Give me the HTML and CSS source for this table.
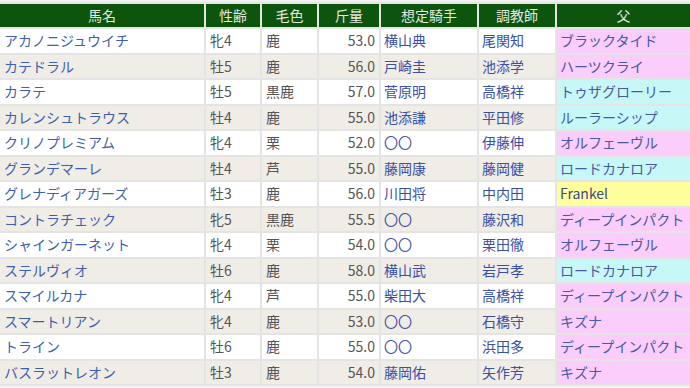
FILE: index.html
```html
<!DOCTYPE html>
<html lang="ja">
<head>
<meta charset="utf-8">
<title>出走予定馬</title>
<link rel="stylesheet" href="styles.css">
</head>
<body>
<table class="entries">
  <colgroup>
    <col class="w-name"><col class="w-sex"><col class="w-coat"><col class="w-wt"><col class="w-jockey"><col class="w-trainer"><col class="w-sire">
  </colgroup>
  <thead>
    <tr><th>馬名</th><th>性齢</th><th>毛色</th><th>斤量</th><th>想定騎手</th><th>調教師</th><th>父</th></tr>
  </thead>
  <tbody>
    <tr><td class="name">アカノニジュウイチ</td><td class="plain">牝4</td><td class="plain">鹿</td><td class="num">53.0</td><td class="link">横山典</td><td class="link">尾関知</td><td class="sire pink">ブラックタイド</td></tr>
    <tr><td class="name">カテドラル</td><td class="plain">牡5</td><td class="plain">鹿</td><td class="num">56.0</td><td class="link">戸崎圭</td><td class="link">池添学</td><td class="sire pink">ハーツクライ</td></tr>
    <tr><td class="name">カラテ</td><td class="plain">牡5</td><td class="plain">黒鹿</td><td class="num">57.0</td><td class="link">菅原明</td><td class="link">高橋祥</td><td class="sire cyan">トゥザグローリー</td></tr>
    <tr><td class="name">カレンシュトラウス</td><td class="plain">牡4</td><td class="plain">鹿</td><td class="num">55.0</td><td class="link">池添謙</td><td class="link">平田修</td><td class="sire cyan">ルーラーシップ</td></tr>
    <tr><td class="name">クリノプレミアム</td><td class="plain">牝4</td><td class="plain">栗</td><td class="num">52.0</td><td class="link">〇〇</td><td class="link">伊藤伸</td><td class="sire pink">オルフェーヴル</td></tr>
    <tr><td class="name">グランデマーレ</td><td class="plain">牡4</td><td class="plain">芦</td><td class="num">55.0</td><td class="link">藤岡康</td><td class="link">藤岡健</td><td class="sire cyan">ロードカナロア</td></tr>
    <tr><td class="name">グレナディアガーズ</td><td class="plain">牡3</td><td class="plain">鹿</td><td class="num">56.0</td><td class="link">川田将</td><td class="link">中内田</td><td class="sire yellow">Frankel</td></tr>
    <tr><td class="name">コントラチェック</td><td class="plain">牝5</td><td class="plain">黒鹿</td><td class="num">55.5</td><td class="link">〇〇</td><td class="link">藤沢和</td><td class="sire pink">ディープインパクト</td></tr>
    <tr><td class="name">シャインガーネット</td><td class="plain">牝4</td><td class="plain">栗</td><td class="num">54.0</td><td class="link">〇〇</td><td class="link">栗田徹</td><td class="sire pink">オルフェーヴル</td></tr>
    <tr><td class="name">ステルヴィオ</td><td class="plain">牡6</td><td class="plain">鹿</td><td class="num">58.0</td><td class="link">横山武</td><td class="link">岩戸孝</td><td class="sire cyan">ロードカナロア</td></tr>
    <tr><td class="name">スマイルカナ</td><td class="plain">牝4</td><td class="plain">芦</td><td class="num">55.0</td><td class="link">柴田大</td><td class="link">高橋祥</td><td class="sire pink">ディープインパクト</td></tr>
    <tr><td class="name">スマートリアン</td><td class="plain">牝4</td><td class="plain">鹿</td><td class="num">53.0</td><td class="link">〇〇</td><td class="link">石橋守</td><td class="sire pink">キズナ</td></tr>
    <tr><td class="name">トライン</td><td class="plain">牡6</td><td class="plain">鹿</td><td class="num">55.0</td><td class="link">〇〇</td><td class="link">浜田多</td><td class="sire pink">ディープインパクト</td></tr>
    <tr><td class="name">バスラットレオン</td><td class="plain">牡3</td><td class="plain">鹿</td><td class="num">54.0</td><td class="link">藤岡佑</td><td class="link">矢作芳</td><td class="sire pink">キズナ</td></tr>
  </tbody>
</table>
</body>
</html>
```

FILE: styles.css
```css
html, body {
  margin: 0;
  padding: 0;
  background: #f2f2f2;
  overflow: hidden;
}

body {
  padding-top: 2px;
  font-family: "Noto Sans CJK JP", "Noto Sans", sans-serif;
  font-size: 14px;
}

.entries {
  width: 694px;
  margin-left: -2px;
  table-layout: fixed;
  border-collapse: separate;
  border-spacing: 2px;
  background: #e4e4e4;
}

.w-name { width: 204px; }
.w-sex { width: 54px; }
.w-coat { width: 55px; }
.w-wt { width: 60px; }
.w-jockey { width: 96px; }
.w-trainer { width: 76px; }
.w-sire { width: 133px; }

.entries th {
  height: 23px;
  padding: 0;
  background: #0d540d;
  color: #e4e8e4;
  font-weight: normal;
  text-align: center;
  line-height: 23px;
}

.entries td {
  height: 23.5px;
  padding: 0 0 0 3px;
  line-height: 23px;
  white-space: nowrap;
  overflow: hidden;
  vertical-align: middle;
}

.entries tbody tr:nth-child(odd) td { background: #ffffff; }
.entries tbody tr:nth-child(even) td { background: #f0ece6; }

.entries td.name {
  padding-left: 4px;
  color: #3d5fb0;
}

.entries td.plain {
  padding-left: 4px;
  color: #555555;
}

.entries td.num {
  padding: 0 4px 0 0;
  text-align: right;
  color: #555555;
}

.entries td.link {
  color: #3a50a6;
}

.entries td.sire { color: #4659a2; }
.entries tbody tr td.pink { background: #facdfa; }
.entries tbody tr td.cyan { background: #c8f7f7; }
.entries tbody tr td.yellow { background: #ffff9c; color: #3a4a8a; }
```
